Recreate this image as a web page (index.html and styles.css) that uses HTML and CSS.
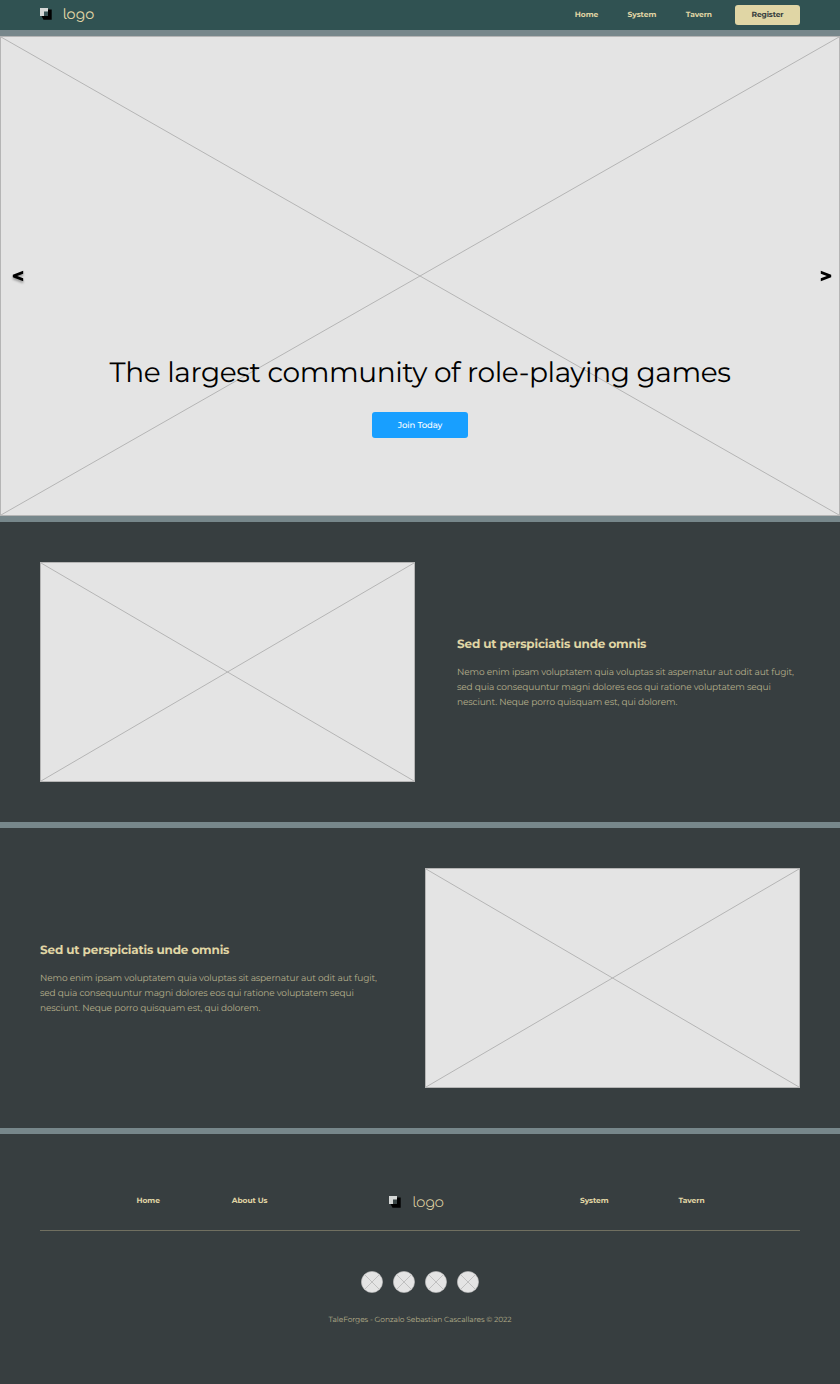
FILE: index.html
```
<!DOCTYPE html>
<html lang="en">
<head><meta charset="utf-8"><title>TaleForges</title><link rel="stylesheet" href="styles.css"></head>
<body>
<header class="header">
  <a class="brand"><svg class="mark" viewBox="0 0 12 12"><path d="M8 1.5h3.7v10.2H3.5L1.5 8H8z"/><path d="M0 0h8v3.5H4V8H0z" fill="#d5d8d7"/><path d="M4 4h4v4H4z" fill="#3b5557"/></svg><span class="wordmark">logo</span></a>
  <nav class="nav"><a class="n-home">Home</a><a class="n-system">System</a><a class="n-tavern">Tavern</a><a class="register"><span>Register</span></a></nav>
</header>
<main>
  <section class="hero">
    <svg class="cross" preserveAspectRatio="none" viewBox="0 0 100 100"><path d="M0 0 100 100M100 0 0 100"/></svg>
    <svg class="arrow prev" viewBox="0 0 12 12"><path d="M11.2 .8v2.9L5.2 6l6 2.3v2.9L.8 7.2V4.8z"/></svg>
    <svg class="arrow next" viewBox="0 0 12 12"><path d="M.8 .8v2.9L6.8 6l-6 2.3v2.9l10.4-4V4.8z"/></svg>
    <div class="hero-copy"><h1>The largest community of role-playing games</h1><a class="join">Join Today</a></div>
  </section>
  <section class="feature">
    <div class="picture"><svg class="cross" preserveAspectRatio="none" viewBox="0 0 100 100"><path d="M0 0 100 100M100 0 0 100"/></svg></div>
    <div class="copy"><h2>Sed ut perspiciatis unde omnis</h2><p>Nemo enim ipsam voluptatem quia voluptas sit aspernatur aut odit aut fugit,<br>sed quia consequuntur magni dolores eos qui ratione voluptatem sequi<br>nesciunt. Neque porro quisquam est, qui dolorem.</p></div>
  </section>
  <section class="feature">
    <div class="copy"><h2>Sed ut perspiciatis unde omnis</h2><p>Nemo enim ipsam voluptatem quia voluptas sit aspernatur aut odit aut fugit,<br>sed quia consequuntur magni dolores eos qui ratione voluptatem sequi<br>nesciunt. Neque porro quisquam est, qui dolorem.</p></div>
    <div class="picture"><svg class="cross" preserveAspectRatio="none" viewBox="0 0 100 100"><path d="M0 0 100 100M100 0 0 100"/></svg></div>
  </section>
</main>
<footer class="footer">
  <nav class="footer-nav">
    <div class="links left"><a>Home</a><a>About Us</a></div>
    <a class="brand"><svg class="mark" viewBox="0 0 12 12"><path d="M8 1.5h3.7v10.2H3.5L1.5 8H8z"/><path d="M0 0h8v3.5H4V8H0z" fill="#d5d8d7"/><path d="M4 4h4v4H4z" fill="#3b4647"/></svg><span class="wordmark">logo</span></a>
    <div class="links right"><a>System</a><a>Tavern</a></div>
  </nav>
  <div class="social">
    <svg viewBox="0 0 22 22"><circle cx="11" cy="11" r="10.6"/><path d="m3.5 3.5 15 15m0-15-15 15"/></svg>
    <svg viewBox="0 0 22 22"><circle cx="11" cy="11" r="10.6"/><path d="m3.5 3.5 15 15m0-15-15 15"/></svg>
    <svg viewBox="0 0 22 22"><circle cx="11" cy="11" r="10.6"/><path d="m3.5 3.5 15 15m0-15-15 15"/></svg>
    <svg viewBox="0 0 22 22"><circle cx="11" cy="11" r="10.6"/><path d="m3.5 3.5 15 15m0-15-15 15"/></svg>
  </div>
  <p class="copyright">TaleForges - Gonzalo Sebastian Cascallares © 2022</p>
</footer>
</body>
</html>
```
FILE: styles.css
```
*{box-sizing:border-box}
body{margin:0;background:#373e40;font-family:Montserrat,Inter,sans-serif;color:#e0d6a5;text-rendering:geometricPrecision}
h1,h2,p{margin:0}
a,h1,p,h2{white-space:nowrap}
.header{height:36px;background:#305252;border-bottom:6px solid #77878b;padding:0 40px;display:flex;justify-content:space-between;align-items:center}
.brand{display:flex;align-items:flex-start}
.mark{width:12px;height:12px;display:block;margin-top:3px}
.wordmark{font:400 14px/20px Comfortaa,Quicksand,Inter,sans-serif;letter-spacing:-.014em;margin:1px 0 0 11px}
.footer .wordmark{font-weight:300;margin-left:11.5px}
.nav{display:flex;align-items:center;font-size:7.5px;font-weight:700;letter-spacing:-.005em;line-height:10px}
.n-home{margin-right:29.3px}
.n-system{margin-right:29.5px}
.n-tavern{margin-right:23px}
.register{width:65px;height:20px;border-radius:3px;background:#e0d6a5;color:#373e40;letter-spacing:-.014em;display:flex;align-items:center;justify-content:center}
.hero{position:relative;height:480px;background:#e4e4e4;display:flex;justify-content:center;align-items:flex-end;padding-bottom:78px}
.cross{position:absolute;inset:0;width:100%;height:100%;border:1px solid #b5b5b5}
.cross path{fill:none;stroke:#b5b5b5;stroke-width:1px;vector-effect:non-scaling-stroke}
.arrow{position:absolute;top:234px;width:12px;height:12px}
.prev{left:12px;filter:drop-shadow(0 2px 1px #0005)}
.next{right:8px}
.hero-copy{position:relative;display:flex;flex-direction:column;align-items:center}
h1{font-size:28px;font-weight:400;letter-spacing:-.014em;line-height:34px;color:#000;margin-bottom:22px}
.join{width:96px;height:26px;border-radius:3px;background:#189fff;color:#fff;font-size:8.5px;font-weight:500;letter-spacing:-.014em;padding-top:2px;display:flex;align-items:center;justify-content:center}
.feature{height:306px;padding:40px 40px 40px;border-top:6px solid #77878b;display:flex;justify-content:space-between;align-items:center}
.picture{position:relative;width:375px;height:220px;background:#e4e4e4}
.copy{width:343px;padding-top:3px}
.feature .copy:first-child{width:375px}
h2{font-size:12px;font-weight:700;letter-spacing:-.014em;line-height:16px;margin-bottom:12px}
.copy p{font-size:9px;font-weight:400;letter-spacing:-.014em;line-height:15px;color:#b5ae8b}
.footer{height:256px;border-top:6px solid #77878b;padding:56px 40px 0}
.footer-nav{height:41px;border-bottom:1px solid #706f60;display:grid;grid-template-columns:349.3px 54.7px 1fr;align-items:start}
.footer-nav .brand{margin-top:3px}
.links{display:flex;font-size:7.5px;font-weight:700;letter-spacing:-.01em;line-height:10px;margin-top:6px}
.left{padding-left:96.5px;gap:72px}
.right{padding-left:136px;gap:70px}
.social{display:flex;justify-content:center;gap:10.3px;margin-top:40px}
.social svg{width:22px;height:22px}
.social circle{fill:#e4e4e4;stroke:#bababa;stroke-width:.6}
.social path{stroke:#b0b0b0;stroke-width:.7}
.copyright{font-size:7.5px;font-weight:400;letter-spacing:-.014em;line-height:10px;text-align:center;margin-top:22px;color:#b5ae8b}
```
